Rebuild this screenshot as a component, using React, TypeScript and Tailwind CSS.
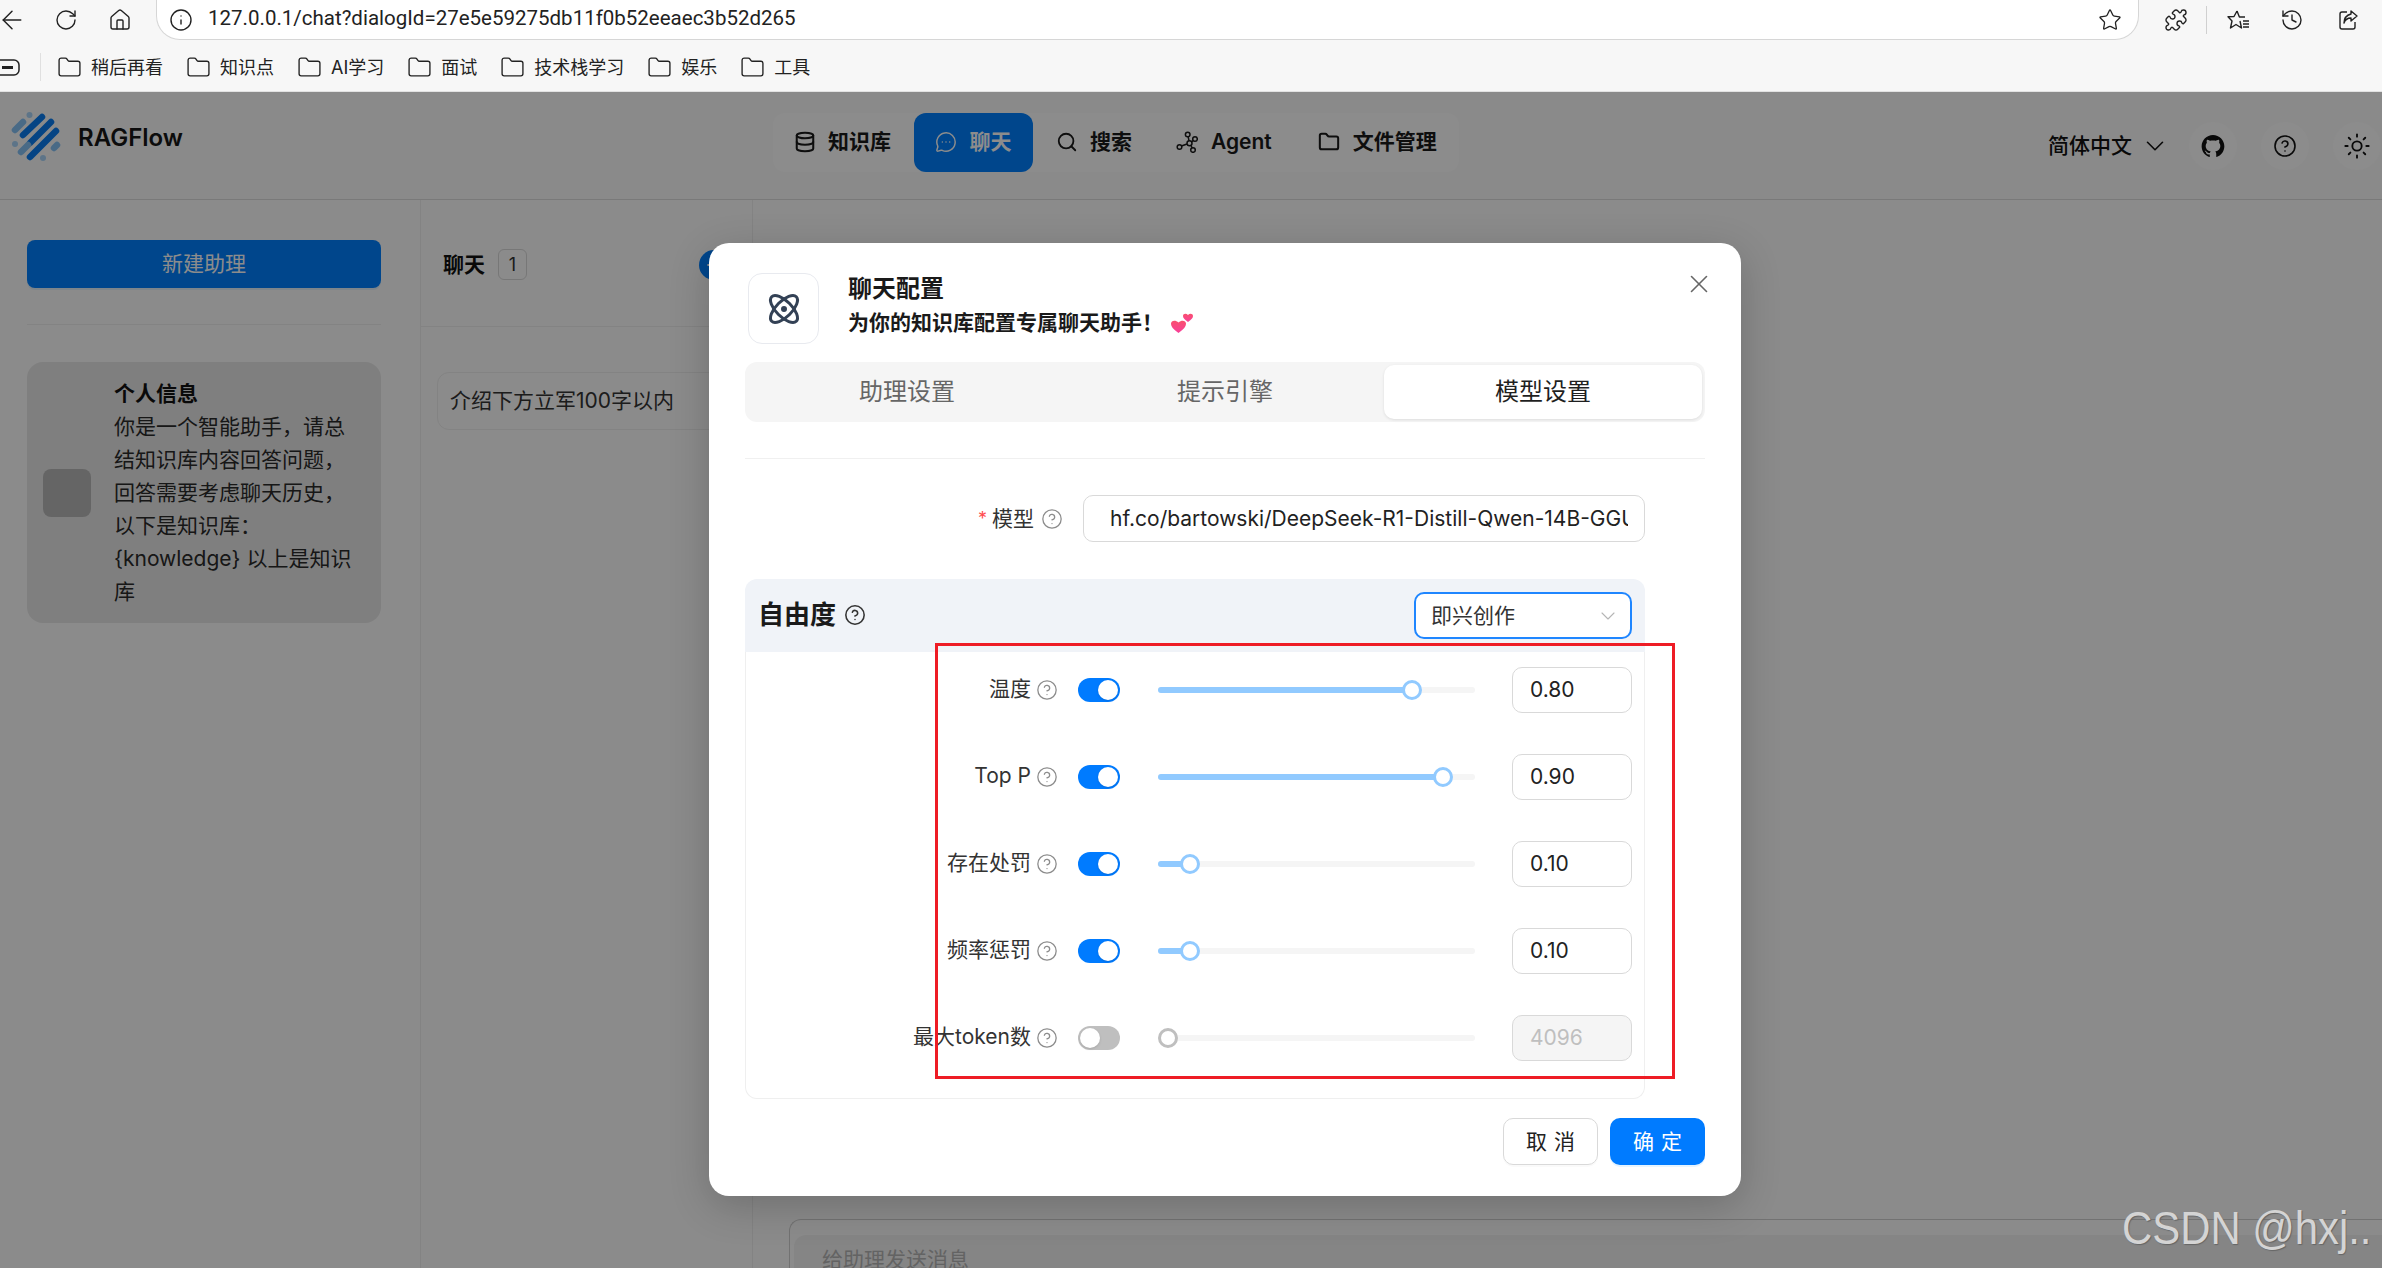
import {
  ArrowLeft,
  Atom,
  ChevronDown,
  CircleHelp,
  Database,
  Folder,
  House,
  History,
  Info,
  MessageCircleMore,
  Plus,
  Puzzle,
  RotateCw,
  Search,
  Star,
  Sun,
  X,
} from "lucide-react"
import { AiOutlineGithub } from "react-icons/ai"

const font = "font-['Inter','Noto_Sans_CJK_SC',sans-serif]"

const bookmarks = ["稍后再看", "知识点", "AI学习", "面试", "技术栈学习", "娱乐", "工具"]

const sliders = [
  { label: "温度", value: "0.80", pos: 254, on: true },
  { label: "Top P", value: "0.90", pos: 285, on: true },
  { label: "存在处罚", value: "0.10", pos: 32, on: true },
  { label: "频率惩罚", value: "0.10", pos: 32, on: true },
  { label: "最大token数", value: "4096", pos: 10, on: false },
]

function Help({ className = "" }: { className?: string }) {
  return <CircleHelp size={22} strokeWidth={1.4} className={`shrink-0 text-[#8c8c8c] ${className}`} />
}

function BrowserBar() {
  return (
    <div className="h-[92px] shrink-0 bg-[#f7f7f7] text-[#222]">
      {/* Address row */}
      <div className="flex h-10 items-center">
        <ArrowLeft size={30} strokeWidth={1.2} className="-ml-[3px]" />
        <RotateCw size={24} strokeWidth={1.4} className="ml-[27px]" />
        <House size={24} strokeWidth={1.4} className="ml-[30px]" />
        <div className="ml-[24px] flex h-10 w-[1983px] items-center rounded-b-[24px] border-x border-b border-[#d6d6d6] bg-white pl-3 pr-[16px]">
          <Info size={24} strokeWidth={1.4} />
          <span className="-mt-[2px] ml-[15px] font-['Roboto',sans-serif] text-[20.5px] text-[#222]">
            127.0.0.1/chat?dialogId=27e5e59275db11f0b52eeaec3b52d265
          </span>
          <Star size={24} strokeWidth={1.3} className="ml-auto" />
        </div>
        <Puzzle size={24} strokeWidth={1.4} className="ml-[25px]" />
        <div className="ml-[18px] h-7 w-px bg-[#d0d0d0]" />
        <svg width="24" height="24" viewBox="0 0 24 24" fill="none" stroke="currentColor" strokeWidth="1.4" strokeLinejoin="round" className="ml-5">
          <path d="M10 3l2.4 6H18M13 13l1.5 7-5.5-3.5L3.500 20l1.500-7L1 8.800l6-.3L10 3" />
          <path d="M16 13h6M16 16h6M16 19h6" />
        </svg>
        <History size={24} strokeWidth={1.4} className="ml-[29px]" />
        <svg width="24" height="24" viewBox="0 0 24 24" fill="none" stroke="currentColor" strokeWidth="1.4" strokeLinejoin="round" className="ml-[32px]">
          <path d="M11 4H6a2 2 0 0 0-2 2v13a2 2 0 0 0 2 2h11a2 2 0 0 0 2-2v-5" />
          <path d="M15 3l6 5-6 5v-3c-4 0-6 2-7 5 0-5 3-8 7-9V3z" />
        </svg>
      </div>
      {/* Bookmarks row */}
      <div className="flex h-[52px] items-center border-b border-[#e2e2e2] pt-[3px]">
        <svg width="22" height="24" viewBox="0 0 22 24" fill="none" stroke="currentColor" strokeWidth="1.5">
          <rect x="-8" y="5" width="27" height="15" rx="5" />
          <path d="M2 12.500h11" strokeWidth="3" />
        </svg>
        <div className="ml-[18px] mr-[16px] h-7 w-px bg-[#e0e0e0]" />
        <div className="flex items-center gap-[23px]">
          {bookmarks.map((b) => (
            <div key={b} className="flex items-center gap-[9px] text-[18px] text-[#222]">
              <Folder size={25} strokeWidth={1.3} />
              <span>{b}</span>
            </div>
          ))}
        </div>
      </div>
    </div>
  )
}

function Logo() {
  return (
    <svg width="52" height="52" viewBox="10 110 52 52" fill="none" strokeLinecap="round" strokeWidth="6.5">
      <g stroke="#0a7df0">
        <path d="M23 135 42 117" />
        <path d="M30 143 51 122" />
        <path d="M30 157 56 131" />
      </g>
      <g stroke="#86c2f5">
        <path d="M15 130 23 122" />
        <path d="M21 152 28 145" />
        <path d="M54 148 57 145" />
      </g>
      <g fill="#a9d4f7">
        <circle cx="29.500" cy="115" r="3" />
        <circle cx="15" cy="144" r="3" />
        <circle cx="43" cy="158" r="3" />
      </g>
    </svg>
  )
}

function AgentIcon() {
  return (
    <svg width="22" height="22" viewBox="0 0 22 22" fill="none" stroke="currentColor" strokeWidth="1.5">
      <circle cx="11.700" cy="3.500" r="2.300" />
      <circle cx="19" cy="8" r="2.300" />
      <circle cx="3.500" cy="16" r="2.300" />
      <circle cx="17" cy="19" r="2.300" />
      <circle cx="13.500" cy="12.300" r="2.500" />
      <path d="M12.200 5.800 13 9.800M17.300 9.500 15.500 11M5.500 15 11 13M15 14.500l1.200 2.500" />
    </svg>
  )
}

function Header() {
  return (
    <header className="flex h-[108px] shrink-0 items-start border-b border-[#dcdcdc] bg-[#fcfcfc]">
      <div className="ml-[10px] mt-[18px] flex items-center">
        <Logo />
        <span className="ml-[16px] mt-[3px] text-[24px] font-semibold text-[#161616]">RAGFlow</span>
      </div>
      <nav className="ml-[590px] mt-[21px] flex h-[59px] w-[686px] items-center rounded-xl bg-white text-[21px] font-semibold text-[#1a1a1a]">
        <div className="-mt-[2px] ml-[21px] flex items-center">
          <Database size={22} strokeWidth={2.2} />
          <span className="ml-[12px]">知识库</span>
        </div>
        <div className="ml-[23px] flex h-[59px] w-[119px] items-center justify-center rounded-xl bg-[#0080ff] pb-[2px] text-white">
          <MessageCircleMore size={22} strokeWidth={1.6} />
          <span className="ml-[12px]">聊天</span>
        </div>
        <div className="-mt-[2px] ml-[23px] flex items-center">
          <Search size={22} strokeWidth={2} />
          <span className="ml-[12px]">搜索</span>
        </div>
        <div className="-mt-[2px] ml-[44px] flex items-center">
          <AgentIcon />
          <span className="ml-[13px]">Agent</span>
        </div>
        <div className="-mt-[2px] ml-[46px] flex items-center">
          <Folder size={22} strokeWidth={2.2} />
          <span className="ml-[13px]">文件管理</span>
        </div>
      </nav>
      <div className="ml-auto mt-[30px] flex items-center pr-[1px] text-[#111]">
        <span className="text-[21px] font-medium">简体中文</span>
        <ChevronDown size={30} strokeWidth={1.3} className="ml-[8px]" />
        <div className="ml-[19px] flex h-12 w-12 items-center justify-center rounded-full bg-white">
          <AiOutlineGithub size={26} />
        </div>
        <div className="ml-6 flex h-12 w-12 items-center justify-center rounded-full bg-white">
          <CircleHelp size={24} strokeWidth={1.6} />
        </div>
        <div className="ml-6 flex h-12 w-12 items-center justify-center rounded-full bg-white">
          <Sun size={28} strokeWidth={1.6} />
        </div>
      </div>
    </header>
  )
}

function Background() {
  return (
    <main className="flex min-h-0 flex-1 bg-[#fdfdfd]">
      {/* Assistants */}
      <div className="w-[421px] shrink-0 border-r border-[#efefef] pl-[27px] pr-[39px] pt-[40px]">
        <div className="flex h-[48px] items-center justify-center rounded-lg bg-[#0080ff] text-[21px] text-white shadow-[0_2px_0_rgba(5,145,255,0.1)]">
          新建助理
        </div>
        <div className="mt-[36px] border-t border-[#efefef]" />
        <div className="mt-[37px] flex h-[261px] items-center rounded-2xl bg-[#e8e8e8] pl-4">
          <div className="h-12 w-12 shrink-0 rounded-lg bg-[#b9b9b9]" />
          <div className="ml-[23px] w-[245px] text-[21px] leading-[33px] text-[#2a2a2a]">
            <div className="font-semibold text-[#111]">个人信息</div>
            <div>你是一个智能助手，请总结知识库内容回答问题，回答需要考虑聊天历史，以下是知识库：{"{knowledge}"} 以上是知识库</div>
          </div>
        </div>
      </div>
      {/* Chats */}
      <div className="w-[332px] shrink-0 border-r border-[#efefef]">
        <div className="flex h-[127px] items-center border-b border-[#efefef] pl-[22px] pr-[23px] pt-[3px]">
          <span className="text-[21px] font-semibold text-[#111]">聊天</span>
          <span className="ml-[13px] flex h-[31px] w-[29px] items-center justify-center rounded-md border border-[#d9d9d9] text-[18px] text-[#333]">
            1
          </span>
          <span className="ml-auto flex h-[30px] w-[30px] items-center justify-center rounded-full bg-[#0080ff] text-white">
            <Plus size={20} strokeWidth={2.5} />
          </span>
        </div>
        <div className="ml-[16px] mr-[23px] mt-[45px] flex h-[58px] items-center rounded-xl border border-[#efefef] pl-[12px] text-[21px] text-[#333]">
          介绍下方立军100字以内
        </div>
      </div>
      {/* Conversation */}
      <div className="min-w-0 flex-1 overflow-hidden pl-[36px] pt-[1019px]">
        <div className="-mr-8 h-[60px] rounded-tl-xl border-l border-t border-[#d0d0d0] pl-[4px] pt-[15px]">
          <div className="h-[60px] rounded-tl-xl bg-[#f2f2f2] pl-[28px] pt-[9px] text-[21px] text-[#b5b5b5]">
            给助理发送消息
          </div>
        </div>
      </div>
    </main>
  )
}

function SliderRow({ label, value, pos, on }: (typeof sliders)[number]) {
  return (
    <div className="flex h-[46px] items-center">
      <div className="flex w-[312px] items-center justify-end text-[21px] text-[#333]">
        <span className="-mt-[2px] whitespace-nowrap">{label}</span>
        <Help className="ml-[5px]" />
      </div>
      <div
        className={
          on
            ? "ml-[20px] flex h-6 w-[42px] items-center justify-end rounded-full bg-[#007bff] px-[2px]"
            : "ml-[20px] flex h-6 w-[42px] items-center justify-start rounded-full bg-[#bfbfbf] px-[2px]"
        }
      >
        <div className="h-5 w-5 rounded-full bg-white shadow-sm" />
      </div>
      <div className="relative ml-[38px] h-[6px] w-[317px] rounded-full bg-[#f5f5f5]">
        {on && <div className="h-full rounded-full bg-[#91caff]" style={{ width: pos }} />}
        <div
          className={
            on
              ? "absolute top-[-7px] h-5 w-5 -translate-x-1/2 rounded-full border-[3px] border-[#91caff] bg-white"
              : "absolute top-[-7px] h-5 w-5 -translate-x-1/2 rounded-full border-[3px] border-[#bfbfbf] bg-white"
          }
          style={{ left: pos }}
        />
      </div>
      <div
        className={
          on
            ? "ml-[37px] flex h-[46px] w-[120px] items-center rounded-[10px] border border-[#d9d9d9] pl-[17px] text-[21px] text-[#222]"
            : "ml-[37px] flex h-[46px] w-[120px] items-center rounded-[10px] border border-[#d9d9d9] bg-[#f5f5f5] pl-[17px] text-[21px] text-[#bfbfbf]"
        }
      >
        {value}
      </div>
    </div>
  )
}

function Hearts() {
  return (
    <svg width="24" height="24" viewBox="0 0 24 24" className="ml-[7px] -mt-[2px]">
      <defs>
        <linearGradient id="heart" x1="0" y1="0" x2="0" y2="1">
          <stop offset="0" stopColor="#f9506e" />
          <stop offset="1" stopColor="#f83f9a" />
        </linearGradient>
      </defs>
      <path fill="url(#heart)" d="M8.500 23 C3 19 1 16.500 1 13.500 C1 10.500 5.500 9.500 8.500 12.500 C11.500 9.500 16 10.500 16 13.500 C16 16.500 14 19 8.500 23Z" />
      <path fill="url(#heart)" d="M18 12 C14.500 9.500 13 8 13 6 C13 3.800 16 3 18 5 C20 3 23 3.800 23 6 C23 8 21.500 9.500 18 12Z" />
    </svg>
  )
}

function ChatConfigModal() {
  return (
    <div className="absolute left-[709px] top-[243px] flex h-[953px] w-[1032px] flex-col rounded-[20px] bg-white pl-[36px] pr-[36px] pt-[30px] shadow-[0_10px_40px_rgba(0,0,0,0.2)]">
      <X size={30} strokeWidth={1.3} className="absolute right-[27px] top-[26px] text-[#666]" />
      <div className="flex h-[71px] items-center">
        <div className="ml-[3px] flex h-[71px] w-[71px] items-center justify-center rounded-[14px] border border-[#e8eaef]">
          <Atom size={36} strokeWidth={2} className="text-[#334155]" />
        </div>
        <div className="ml-[29px] -mt-[5px]">
          <div className="text-[24px] font-semibold leading-[34px] text-[#1a1a1a]">聊天配置</div>
          <div className="flex items-center text-[21px] font-semibold leading-[34px] text-[#1a1a1a]">
            为你的知识库配置专属聊天助手！
            <Hearts />
          </div>
        </div>
      </div>

      {/* Tabs */}
      <div className="mt-[18px] grid h-[60px] grid-cols-3 rounded-xl bg-[#f5f5f5] p-[3px] text-[24px] text-[#666]">
        <div className="flex items-center justify-center">助理设置</div>
        <div className="flex items-center justify-center">提示引擎</div>
        <div className="flex items-center justify-center rounded-[10px] bg-white text-[#1f1f1f] shadow-[0_1px_3px_rgba(0,0,0,0.1)]">模型设置</div>
      </div>
      <div className="mt-[36px] border-t border-[#f0f0f0]" />

      {/* Model */}
      <div className="mt-[36px] flex h-[47px] w-[900px] items-center">
        <div className="flex w-[318px] items-center justify-end text-[21px] text-[#333]">
          <span className="mr-[5px] text-[18px] text-[#ff4d4f]">*</span>
          模型
          <Help className="ml-[7px]" />
        </div>
        <div className="ml-[20px] flex h-[47px] w-[562px] items-center overflow-hidden rounded-[10px] border border-[#d9d9d9] pl-[26px] pr-[16px] text-[21px] text-[#222]">
          <span className="overflow-hidden whitespace-nowrap">hf.co/bartowski/DeepSeek-R1-Distill-Qwen-14B-GGUF</span>
        </div>
      </div>

      {/* Freedom */}
      <div className="mt-[37px] w-[900px]">
        <div className="flex h-[73px] items-center justify-between rounded-t-xl bg-[#f0f3f8] pl-[13px] pr-[13px]">
          <div className="-mt-[2px] flex items-center text-[26px] font-semibold text-[#1a1a1a]">
            自由度
            <CircleHelp size={22} strokeWidth={1.7} className="ml-[8px] text-[#333]" />
          </div>
          <div className="flex h-[47px] w-[218px] items-center justify-between rounded-[10px] border-2 border-[#1f86ff] bg-white pl-[15px] pr-[10px] text-[21px] text-[#333]">
            即兴创作
            <ChevronDown size={24} strokeWidth={1.1} className="text-[#b5b5b5]" />
          </div>
        </div>
        <div className="flex h-[447px] flex-col gap-[41px] rounded-b-xl border border-t-0 border-[#efefef] pt-[15px]">
          {sliders.map((s) => (
            <SliderRow key={s.label} {...s} />
          ))}
        </div>
      </div>

      {/* Footer */}
      <div className="mt-[19px] flex justify-end gap-[12px] text-[21px]">
        <div className="flex h-[47px] w-[95px] items-center justify-center rounded-[10px] border border-[#d9d9d9] pl-[7px] tracking-[7px] text-[#222] shadow-[0_2px_0_rgba(0,0,0,0.02)]">
          取消
        </div>
        <div className="flex h-[47px] w-[95px] items-center justify-center rounded-[10px] bg-[#007bff] pl-[7px] tracking-[7px] text-white shadow-[0_2px_0_rgba(5,145,255,0.1)]">
          确定
        </div>
      </div>
    </div>
  )
}

export default function App() {
  return (
    <div className={`relative flex h-[1268px] w-[2382px] flex-col overflow-hidden bg-white ${font}`}>
      <BrowserBar />
      <Header />
      <Background />
      {/* Dialog mask */}
      <div className="absolute inset-x-0 bottom-0 top-[92px] bg-black/45" />
      <ChatConfigModal />
      {/* Annotation drawn over the screenshot */}
      <div className="absolute left-[935px] top-[643px] h-[436px] w-[740px] border-[3px] border-[#ee1c25]" />
      <div className="absolute left-[2122px] top-[1201px] origin-left scale-x-[0.91] whitespace-nowrap font-['Liberation_Sans',sans-serif] text-[46px] leading-[54px] text-[#d4d4d4] [text-shadow:1px_1px_1px_#666]">
        CSDN @hxj..
      </div>
    </div>
  )
}
